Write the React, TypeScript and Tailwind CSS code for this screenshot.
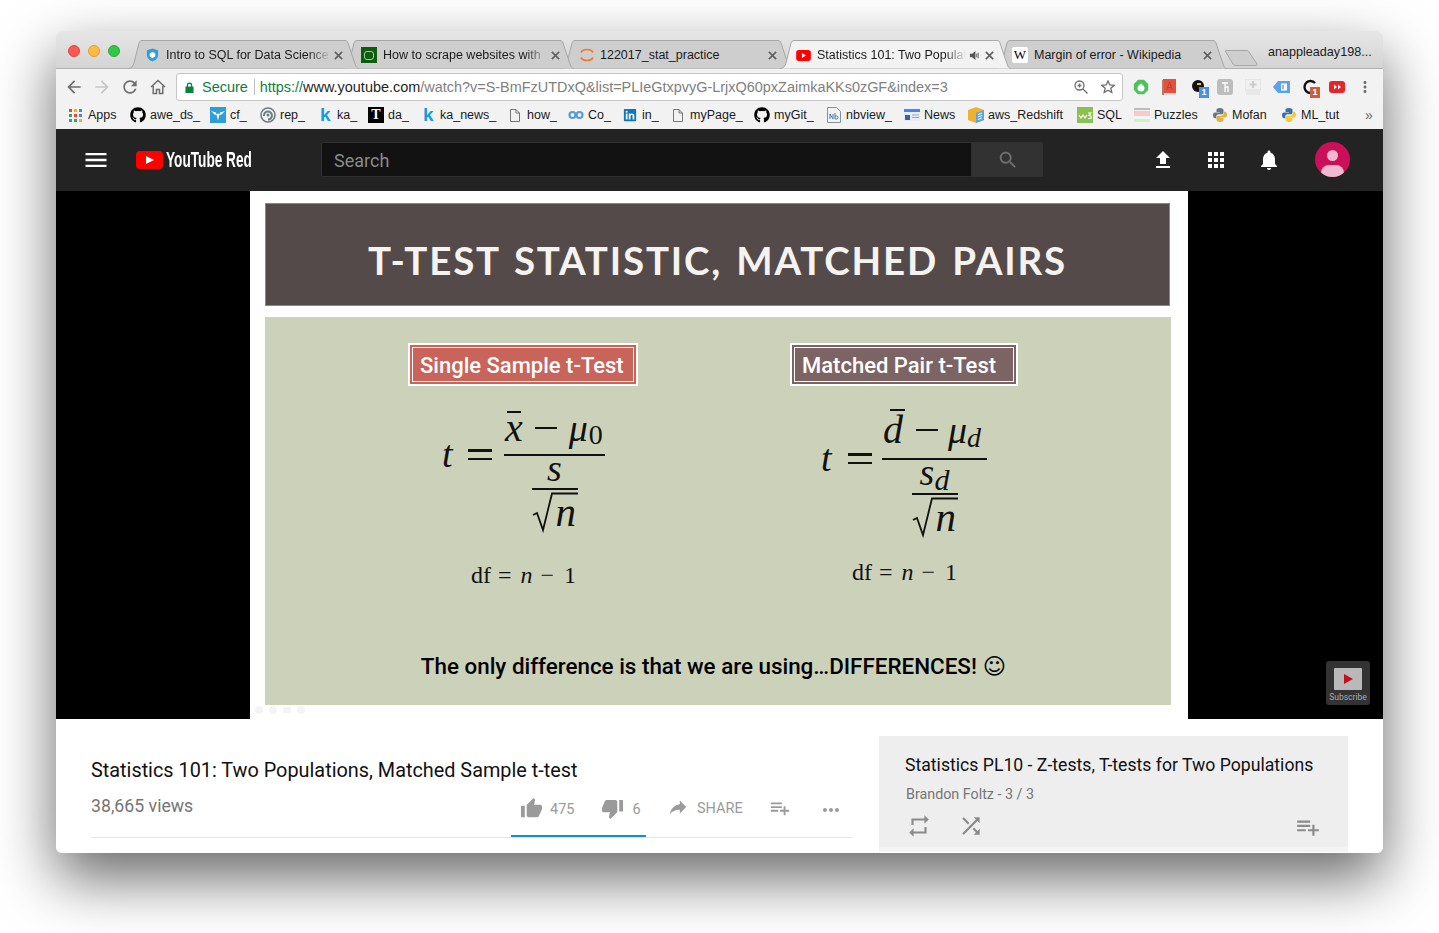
import React from "react";
import { FaGithub, FaLinkedin } from "react-icons/fa";

const P = ({ d, cls, vb = "0 0 24 24" }: { d: string; cls: string; vb?: string }) => (
  <svg viewBox={vb} className={cls} fill="currentColor"><path d={d} /></svg>
);

const I = {
  menu: "M3 18h18v-2H3v2zm0-5h18v-2H3v2zm0-7v2h18V6H3z",
  search: "M15.5 14h-.79l-.28-.27C15.41 12.59 16 11.11 16 9.5 16 5.91 13.09 3 9.5 3S3 5.91 3 9.5 5.91 16 9.5 16c1.61 0 3.09-.59 4.23-1.57l.27.28v.79l5 4.99L20.49 19l-4.99-5zm-6 0C7.01 14 5 11.99 5 9.5S7.01 5 9.5 5 14 7.01 14 9.5 11.99 14 9.5 14z",
  upload: "M9 16h6v-6h4l-7-7-7 7h4zm-4 2h14v2H5z",
  apps: "M4 8h4V4H4v4zm6 12h4v-4h-4v4zm-6 0h4v-4H4v4zm0-6h4v-4H4v4zm6 0h4v-4h-4v4zm6-10v4h4V4h-4zm-6 4h4V4h-4v4zm6 6h4v-4h-4v4zm0 6h4v-4h-4v4z",
  bell: "M12 22c1.1 0 2-.9 2-2h-4c0 1.1.89 2 2 2zm6-6v-5c0-3.07-1.64-5.64-4.5-6.32V4c0-.83-.67-1.5-1.5-1.5s-1.5.67-1.5 1.5v.68C7.63 5.36 6 7.92 6 11v5l-2 2v1h16v-1l-2-2z",
  up: "M1 21h4V9H1v12zm22-11c0-1.1-.9-2-2-2h-6.31l.95-4.57.03-.32c0-.41-.17-.79-.44-1.06L14.17 1 7.59 7.59C7.22 7.95 7 8.45 7 9v10c0 1.1.9 2 2 2h9c.83 0 1.54-.5 1.84-1.22l3.02-7.05c.09-.23.14-.47.14-.73v-2z",
  down: "M15 3H6c-.83 0-1.54.5-1.84 1.22l-3.02 7.05c-.09.23-.14.47-.14.73v2c0 1.1.9 2 2 2h6.31l-.95 4.57-.03.32c0 .41.17.79.44 1.06L9.83 23l6.59-6.59c.36-.36.58-.86.58-1.41V5c0-1.1-.9-2-2-2zm4 0v12h4V3h-4z",
  share: "M14 9V5l7 7-7 7v-4.1c-5 0-8.5 1.6-11 5.1 1-5 4-10 11-11z",
  add: "M14 10H2v2h12v-2zm0-4H2v2h12V6zm4 8v-4h-2v4h-4v2h4v4h2v-4h4v-2h-4zM2 16h8v-2H2v2z",
  repeat: "M7 7h10v3l4-4-4-4v3H5v6h2V7zm10 10H7v-3l-4 4 4 4v-3h12v-6h-2v4z",
  shuffle: "M10.59 9.17L5.41 4 4 5.41l5.17 5.17 1.42-1.41zM14.5 4l2.04 2.04L4 18.59 5.41 20 17.96 7.46 20 9.5V4h-5.5zm.33 9.41l-1.41 1.41 3.13 3.13L14.5 20H20v-5.5l-2.04 2.04-3.13-3.13z",
  back: "M20 11H7.83l5.59-5.59L12 4l-8 8 8 8 1.41-1.41L7.83 13H20v-2z",
  forward: "M12 4l-1.41 1.41L16.17 11H4v2h12.17l-5.58 5.59L12 20l8-8z",
  reload: "M17.65 6.35C16.2 4.9 14.21 4 12 4c-4.42 0-7.99 3.58-7.99 8s3.57 8 7.99 8c3.73 0 6.84-2.55 7.73-6h-2.08c-.82 2.33-3.04 4-5.65 4-3.31 0-6-2.69-6-6s2.69-6 6-6c1.66 0 3.14.69 4.22 1.78L13 11h7V4l-2.35 2.35z",
  dots: "M6 10c-1.1 0-2 .9-2 2s.9 2 2 2 2-.9 2-2-.9-2-2-2zm12 0c-1.1 0-2 .9-2 2s.9 2 2 2 2-.9 2-2-.9-2-2-2zm-6 0c-1.1 0-2 .9-2 2s.9 2 2 2 2-.9 2-2-.9-2-2-2z",
};

const Close = () => (
  <svg viewBox="0 0 10 10" className="w-[9px] h-[9px] text-[#5f5f5f]" stroke="currentColor" strokeWidth="1.8"><path d="M1 1l8 8M9 1l-8 8" /></svg>
);

const TAB_W = 231;

const Tab = ({ wrap, active, icon, iconCls, text, textCls, speaker, closeCls }: { wrap: string; active?: boolean; icon: React.ReactNode; iconCls: string; text: string; textCls: string; speaker?: boolean; closeCls: string }) => (
  <div className={`relative h-[29px] shrink-0 ${wrap}`}>
    <svg width={TAB_W} height={29} className="absolute left-0 top-0">
      <path d={`M0.5 28.5 C4 28 5 26 6 23 L11 3 C11.6 1.4 12.5 0.5 14 0.5 L${TAB_W - 14} 0.5 C${TAB_W - 12.5} 0.5 ${TAB_W - 11.6} 1.4 ${TAB_W - 11} 3 L${TAB_W - 4} 24 C${TAB_W - 3} 27 ${TAB_W - 2} 28 ${TAB_W - 0.5} 28.5`} fill={active ? "#f2f2f2" : "#cecece"} stroke={active ? "#a9a9a9" : "#a6a6a6"} />
    </svg>
    <div className="relative flex items-center h-full w-[231px] pt-[1px]">
      <div className={`flex items-center justify-start h-[16px] shrink-0 ${iconCls}`}>{icon}</div>
      <span className={`text-[12.5px] text-[#1a1a1a] whitespace-nowrap overflow-hidden [mask-image:linear-gradient(to_right,black_86%,transparent)] ${textCls}`}>{text}</span>
      {speaker && (
        <svg viewBox="0 0 12 12" className="w-[11px] h-[11px] ml-[3px] text-[#555]" fill="currentColor"><path d="M1 4h2.5L7 1v10L3.500 8H1z" /><path d="M8.500 4v4M10 3v6" stroke="currentColor" fill="none" /></svg>
      )}
      <div className={closeCls}><Close /></div>
    </div>
  </div>
);

const DocIcon = () => (
  <svg viewBox="0 0 10 13" className="w-[10px] h-[13px]" fill="none" stroke="#777"><path d="M.5.5h5.500l3.500 3.500v8.500h-9zM6 .5v3.500h3.500" /></svg>
);
const KIcon = () => <span className="w-[10px] text-[#1c9ad6] font-bold text-[19px] leading-[16px] [font-family:'Liberation_Sans',sans-serif]">k</span>;
const Python = ({ cls = "", c1 = "#3572a5", c2 = "#f2c83c" }: { cls?: string; c1?: string; c2?: string }) => (
  <svg viewBox="0 0 16 16" className={`w-[16px] h-[16px] ${cls}`}>
    <path d="M8 1C5 1 4.500 2 4.500 3.200V5H8v.6H3C1.600 5.600 1 6.800 1 8.300s.6 2.900 2 2.900h1.300V9.500c0-1.200 1-2.200 2.200-2.200h3.200c1 0 1.800-.8 1.800-1.800V3.200C11.500 2 10.500 1 8 1z" fill={c1} />
    <path d="M8 15c3 0 3.500-1 3.500-2.200V11H8v-.6h5c1.400 0 2-1.200 2-2.700s-.6-2.900-2-2.900h-1.300v1.700c0 1.200-1 2.200-2.200 2.200H6.300c-1 0-1.800.8-1.800 1.800v2.300C4.500 14 5.500 15 8 15z" fill={c2} />
  </svg>
);

const bookmarks: { icon: React.ReactNode; t: string; ml: string; gap: string; w: string }[] = [
  { t: "Apps", ml: "ml-0", gap: "ml-[6px]", w: "w-[30px]", icon: (
    <svg viewBox="0 0 13 13" className="w-[13px] h-[13px]">
      {[["#e8453c", 0, 0], ["#f4b400", 5, 0], ["#4285f4", 10, 0], ["#34a853", 0, 5], ["#e8453c", 5, 5], ["#4285f4", 10, 5], ["#4285f4", 0, 10], ["#34a853", 5, 10], ["#f4b400", 10, 10]].map(([c, x, y], i) => (
        <rect key={i} x={x as number} y={y as number} width="3" height="3" fill={c as string} />
      ))}
    </svg>) },
  { t: "awe_ds_", ml: "ml-[12px]", gap: "ml-[4px]", w: "w-[47px]", icon: <FaGithub className="w-[16px] h-[16px] text-black" /> },
  { t: "cf_", ml: "ml-[13px]", gap: "ml-[4px]", w: "w-[17px]", icon: (
    <svg viewBox="0 0 16 16" className="w-[16px] h-[16px]"><rect width="16" height="16" fill="#2d9fd8" /><path d="M1 4l5 1.500 2 8 2-8L15 4l-4 4-3-1.500L5 8z" fill="#fff" /></svg>) },
  { t: "rep_", ml: "ml-[13px]", gap: "ml-[4px]", w: "w-[24px]", icon: (
    <svg viewBox="0 0 16 16" className="w-[16px] h-[16px]" fill="none"><circle cx="8" cy="8" r="7" stroke="#6b7c86" strokeWidth="1.600" /><path d="M4 9a4 4 0 1 1 4 3.500" stroke="#6b7c86" strokeWidth="2" /><circle cx="8" cy="8" r="1.500" fill="#6b7c86" /></svg>) },
  { t: "ka_", ml: "ml-[16px]", gap: "ml-[7px]", w: "w-[19px]", icon: <KIcon /> },
  { t: "da_", ml: "ml-[12px]", gap: "ml-[4px]", w: "w-[20px]", icon: (
    <div className="w-[16px] h-[16px] bg-black text-white text-[14px] leading-[16px] font-bold text-center [font-family:'Liberation_Serif',serif]">T</div>) },
  { t: "ka_news_", ml: "ml-[15px]", gap: "ml-[7px]", w: "w-[54px]", icon: <KIcon /> },
  { t: "how_", ml: "ml-[16px]", gap: "ml-[7px]", w: "w-[28px]", icon: <DocIcon /> },
  { t: "Co_", ml: "ml-[13px]", gap: "ml-[4px]", w: "w-[21px]", icon: (
    <svg viewBox="0 0 16 16" className="w-[16px] h-[16px]" fill="none" stroke="#5c9bd8" strokeWidth="2.200"><circle cx="4.500" cy="8" r="3" /><circle cx="11.500" cy="8" r="3" /></svg>) },
  { t: "in_", ml: "ml-[14px]", gap: "ml-[5px]", w: "w-[16px]", icon: <FaLinkedin className="w-[14px] h-[14px] text-[#0b77b5]" /> },
  { t: "myPage_", ml: "ml-[15px]", gap: "ml-[7px]", w: "w-[51px]", icon: <DocIcon /> },
  { t: "myGit_", ml: "ml-[13px]", gap: "ml-[4px]", w: "w-[39px]", icon: <FaGithub className="w-[16px] h-[16px] text-black" /> },
  { t: "nbview_", ml: "ml-[14px]", gap: "ml-[5px]", w: "w-[45px]", icon: (
    <svg viewBox="0 0 14 16" className="w-[14px] h-[16px]" fill="none"><path d="M.5.5h9l4 4v11H.5z" stroke="#8a9099" /><path d="M3 12V7l3 5V7M8 6v6h1.500a1.500 1.500 0 0 0 0-3H8" stroke="#4a7fb5" /></svg>) },
  { t: "News", ml: "ml-[13px]", gap: "ml-[4px]", w: "w-[32px]", icon: (
    <svg viewBox="0 0 16 16" className="w-[16px] h-[16px]"><rect y="2" width="16" height="12" fill="#e8edf5" /><rect y="2" width="16" height="3" fill="#4285f4" /><rect x="1" y="8" width="5" height="5" fill="#3c5bb8" /><path d="M8 8h7M8 10.500h7" stroke="#9aa5b8" /></svg>) },
  { t: "aws_Redshift", ml: "ml-[12px]", gap: "ml-[4px]", w: "w-[76px]", icon: (
    <svg viewBox="0 0 16 16" className="w-[16px] h-[16px]"><path d="M8 0l8 3v10l-8 3-8-3V3z" fill="#f0b030" /><path d="M8 6l8-3v10l-8 3z" fill="#5ba7d8" /><path d="M10 7.500l4-1.500M10 10l4-1.500M10 12.500l4-1.500" stroke="#fff" /></svg>) },
  { t: "SQL", ml: "ml-[13px]", gap: "ml-[4px]", w: "w-[24px]", icon: (
    <svg viewBox="0 0 16 16" className="w-[16px] h-[16px]"><rect width="16" height="16" fill="#8cc152" /><path d="M2 8l2 3 2-3 2 3 2-3M11 6h3l-2 2.500q3 0 2 3h-3" stroke="#fff" fill="none" strokeWidth="1.200" /></svg>) },
  { t: "Puzzles", ml: "ml-[13px]", gap: "ml-[4px]", w: "w-[44px]", icon: (
    <svg viewBox="0 0 16 16" className="w-[16px] h-[16px]"><rect y="1" width="16" height="2" fill="#bbb" /><rect y="4" width="16" height="5" fill="#f9c8c8" /><rect y="9" width="16" height="3" fill="#f5f5f5" /><rect y="12" width="16" height="3" fill="#cdf3c0" /></svg>) },
  { t: "Mofan", ml: "ml-[14px]", gap: "ml-[4px]", w: "w-[36px]", icon: <Python c1="#64748b" c2="#e0b040" /> },
  { t: "ML_tut", ml: "ml-[13px]", gap: "ml-[4px]", w: "w-[39px]", icon: <Python /> },
];

const Badge = ({ n, cls }: { n: string; cls: string }) => (
  <span className={`absolute -right-[2px] -bottom-[3px] w-[10px] h-[11px] text-white text-[9px] leading-[11px] font-bold text-center ${cls}`}>{n}</span>
);

const Toolbar = () => (
  <div className="h-[32px] shrink-0 bg-[#f2f2f2] flex items-center pt-[4px]">
    <P d={I.back} cls="w-[20px] h-[20px] ml-[8px] text-[#6e6e6e]" />
    <P d={I.forward} cls="w-[20px] h-[20px] ml-[8px] text-[#c6c6c6]" />
    <P d={I.reload} cls="w-[20px] h-[20px] ml-[8px] text-[#6e6e6e]" />
    <svg viewBox="0 0 16 16" className="w-[16px] h-[16px] ml-[10px] text-[#6e6e6e]" fill="none" stroke="currentColor" strokeWidth="1.500"><path d="M1 8l7-6.500L15 8M3.200 7v7.500h3.300v-4h3v4h3.300V7" /></svg>
    <div className="ml-[10px] w-[947px] h-[28px] bg-white border border-[#c6c6c6] rounded-[3px] flex items-center text-[14.45px] whitespace-nowrap">
      <svg viewBox="0 0 10 12" className="w-[9px] h-[11px] ml-[8px] text-[#0b8043]" fill="currentColor"><path d="M2 5V3.500a3 3 0 0 1 6 0V5h1.500v7H.5V5zM3.300 5h3.400V3.500a1.700 1.700 0 0 0-3.400 0z" /></svg>
      <span className="ml-[8px] pt-[1px] text-[#0b8043]">Secure</span>
      <span className="ml-[6px] w-px h-[16px] bg-[#bdbdbd]" />
      <span className="ml-[5px] pt-[1px] text-[#0b8043]">https://</span>
      <span className="pt-[1px] text-[#1f1f1f]">www.youtube.com</span>
      <span className="pt-[1px] text-[#808080]">/watch?v=S-BmFzUTDxQ&amp;list=PLIeGtxpvyG-LrjxQ60pxZaimkaKKs0zGF&amp;index=3</span>
      <div className="ml-auto flex items-center mr-[7px]">
        <svg viewBox="0 0 14 14" className="w-[14px] h-[14px] text-[#6e6e6e]" fill="none" stroke="currentColor" strokeWidth="1.300"><circle cx="5.500" cy="5.500" r="4.500" /><path d="M9 9l4.500 4.500M3.500 5.500h4M5.500 3.500v4" /></svg>
        <svg viewBox="0 0 14 14" className="w-[14px] h-[14px] ml-[13px] text-[#6e6e6e]" fill="none" stroke="currentColor" strokeWidth="1.300"><path d="M7 1l1.800 4 4.200.4-3.200 2.800 1 4.300L7 10.200 3.200 12.500l1-4.300L1 5.400 5.200 5z" /></svg>
      </div>
    </div>
    <div className="ml-[10px] flex items-center">
      <svg viewBox="0 0 16 16" className="w-[16px] h-[16px]"><path d="M5 .8h6L15.200 5v6L11 15.200H5L.8 11V5z" fill="#4cc25c" /><path d="M8 4.500c3 2 3.500 3.500 3.500 4.500a3.500 3.500 0 0 1-7 0c0-1 .5-2.500 3.500-4.500z" fill="#fff" /></svg>
      <svg viewBox="0 0 14 16" className="w-[14px] h-[16px] ml-[13px]"><rect x="1" width="13" height="14" fill="#e0523f" /><path d="M7.500 3l-3 8M7.500 3l3 8M5.500 8.500h4" stroke="#c43c2c" fill="none" /><rect y="1" width="2" height="15" fill="#b87a5a" /><rect x="2" y="14" width="12" height="2" fill="#ddd" /></svg>
      <div className="relative w-[16px] h-[16px] ml-[15px]">
        <svg viewBox="0 0 16 16" className="w-[16px] h-[16px]"><circle cx="7" cy="7" r="6" fill="#111" /><path d="M6 4h4v2H6z" fill="#f5c518" /></svg>
        <Badge n="1" cls="bg-[#4a90e2]" />
      </div>
      <svg viewBox="0 0 16 16" className="w-[16px] h-[16px] ml-[10px]"><rect width="16" height="16" rx="3" fill="#bdbdbd" /><path d="M5 4h6M8 4v9M8 8h3v5" stroke="#fff" fill="none" strokeWidth="1.300" /></svg>
      <svg viewBox="0 0 16 16" className="w-[16px] h-[16px] ml-[12px]"><rect width="16" height="11" fill="#f0f0f0" stroke="#ddd" /><path d="M8 2v7M4.500 5.500h7" stroke="#ccc" strokeWidth="2" /><path d="M1 13h14M1 15h14" stroke="#ddd" /></svg>
      <svg viewBox="0 0 17 14" className="w-[17px] h-[14px] ml-[12px]"><path d="M5 1h12v12H5L0 7z" fill="#5aa3ec" /><rect x="8" y="3.500" width="6" height="7" fill="#fff" /><path d="M10 5v4" stroke="#5aa3ec" strokeWidth="1.500" /></svg>
      <div className="relative w-[16px] h-[16px] ml-[12px]">
        <svg viewBox="0 0 16 16" className="w-[16px] h-[16px]" fill="none"><path d="M13 4A6 6 0 1 0 13 12" stroke="#111" strokeWidth="2.400" /></svg>
        <Badge n="1" cls="bg-[#c9603a]" />
      </div>
      <svg viewBox="0 0 16 12" className="w-[16px] h-[12px] ml-[11px]"><rect width="16" height="12" rx="3" fill="#e6252b" /><path d="M5 3.500l3 2.500-3 2.500zM9 3.500l3 2.500-3 2.500z" fill="#fff" /></svg>
      <P d="M12 8c1.100 0 2-.9 2-2s-.9-2-2-2-2 .9-2 2 .9 2 2 2zm0 2c-1.100 0-2 .9-2 2s.9 2 2 2 2-.9 2-2-.9-2-2-2zm0 6c-1.100 0-2 .9-2 2s.9 2 2 2 2-.9 2-2-.9-2-2-2z" cls="w-[18px] h-[18px] ml-[11px] text-[#6e6e6e]" />
    </div>
  </div>
);

const MathT = ({ children, cls = "" }: { children: React.ReactNode; cls?: string }) => (
  <span className={`italic [font-family:'Liberation_Serif',serif] ${cls}`}>{children}</span>
);

const Root = () => (
  <div className="relative h-[44px] w-[46px]">
    <svg viewBox="0 0 46 44" className="absolute inset-0 w-[46px] h-[44px]" fill="none" stroke="#111"><path d="M1 25l4-2 6 17L20 3.500h26" strokeWidth="1.800" /></svg>
    <MathT cls="absolute left-[24px] top-[2px] text-[41px] leading-[40px]">n</MathT>
  </div>
);

const Label = ({ text, cls }: { text: string; cls: string }) => (
  <div className={`h-[43px] border-[2px] border-white p-[2px] ${cls}`}>
    <div className="h-full border border-white flex items-center pl-[7px] pt-[2px] text-white text-[22px] font-medium whitespace-nowrap [font-family:'Roboto',sans-serif]">{text}</div>
  </div>
);

const Equals = () => (
  <div className="w-[24px] flex flex-col gap-[6px]"><div className="h-[2.500px] bg-[#111]" /><div className="h-[2.500px] bg-[#111]" /></div>
);

const Minus = () => <div className="w-[22px] h-[2px] bg-[#111] shrink-0" />;

const Df = ({ cls }: { cls: string }) => (
  <div className={`h-[30px] flex items-center text-[24px] text-[#111] whitespace-nowrap [font-family:'Liberation_Serif',serif] ${cls}`}>
    <span>df</span><span className="ml-[7px]">=</span><MathT cls="ml-[9px]">n</MathT><span className="ml-[8px]">−</span><span className="ml-[10px]">1</span>
  </div>
);

const Slide = () => (
  <div className="flex-1 flex flex-col bg-white pt-[12px] pl-[15px] pr-[17px] overflow-hidden relative">
    <div className="h-[103px] w-[905px] pt-[12px] bg-[#554a4a] border border-[#8d8484] flex items-center justify-center text-[38.500px] text-[#f5f3f0] font-bold tracking-[1.800px] [word-spacing:3px] [font-family:'Lato',sans-serif] whitespace-nowrap">T-TEST STATISTIC, MATCHED PAIRS</div>
    <div className="mt-[11px] h-[388px] w-[906px] bg-[#ccd1ba] flex flex-col">
      <div className="flex pt-[26px] pl-[143px] h-[274px]">
        <div className="flex flex-col w-[230px]">
          <Label text="Single Sample t-Test" cls="bg-[#c8645a] w-[230px]" />
          <div className="flex items-start mt-[24px] ml-[34px]">
            <MathT cls="text-[38px] leading-[40px] mt-[24px] w-[26px] text-[#111]">t</MathT>
            <div className="mt-[39px]"><Equals /></div>
            <div className="ml-[12px] w-[101px] flex flex-col items-center text-[#111]">
              <div className="h-[44px] w-full flex items-center pl-[1px] pb-[9px]">
                <div className="relative"><MathT cls="text-[40px] leading-[40px]">x</MathT><div className="absolute left-[2px] right-[2px] top-[3px] h-[2px] bg-[#111]" /></div>
                <div className="ml-[12px]"><Minus /></div>
                <MathT cls="ml-[12px] text-[38px] leading-[40px]">μ</MathT>
                <span className="ml-[1px] text-[28px] leading-[27px] mt-[14px] [font-family:'Liberation_Serif',serif]">0</span>
              </div>
              <div className="h-[2px] w-full bg-[#111]" />
              <div className="h-[32px] flex items-center pb-[8px]"><MathT cls="text-[38px] leading-[30px]">s</MathT></div>
              <div className="h-[2px] w-[46px] bg-[#111]" />
              <Root />
            </div>
          </div>
          <Df cls="mt-[26px] ml-[63px]" />
        </div>
        <div className="flex flex-col w-[228px] ml-[152px]">
          <Label text="Matched Pair t-Test" cls="bg-[#7d6464] w-[228px]" />
          <div className="flex items-start mt-[26px] ml-[31px]">
            <MathT cls="text-[38px] leading-[40px] mt-[26px] w-[27px] text-[#111]">t</MathT>
            <div className="mt-[41px]"><Equals /></div>
            <div className="ml-[10px] w-[105px] flex flex-col items-center text-[#111]">
              <div className="h-[46px] w-full flex items-center pl-[1px] pb-[10px]">
                <div className="relative"><MathT cls="text-[40px] leading-[40px]">d</MathT><div className="absolute left-[7px] right-[-2px] -top-[1px] h-[2px] bg-[#111]" /></div>
                <div className="ml-[13px]"><Minus /></div>
                <MathT cls="ml-[10px] text-[38px] leading-[40px]">μ</MathT>
                <MathT cls="text-[28px] leading-[27px] mt-[14px]">d</MathT>
              </div>
              <div className="h-[2px] w-full bg-[#111]" />
              <div className="h-[33px] flex items-center pb-[10px]"><MathT cls="text-[38px] leading-[26px]">s</MathT><MathT cls="text-[30px] leading-[27px] mt-[15px]">d</MathT></div>
              <div className="h-[2px] w-[46px] bg-[#111]" />
              <Root />
            </div>
          </div>
          <Df cls="mt-[18px] ml-[62px]" />
        </div>
      </div>
      <div className="mt-[60px] h-[30px] pr-[9px] pt-[1px] flex items-center justify-center text-[22.4px] font-medium text-black whitespace-nowrap [font-family:'Roboto',sans-serif]">The only difference is that we are using…DIFFERENCES! <span className="ml-[6px] [font-family:'DejaVu_Sans',sans-serif] font-normal">☺</span></div>
    </div>
    <div className="flex items-center gap-[6px] mt-[1px] ml-[-10px] opacity-10">
      <div className="w-[8px] h-[8px] rounded-full bg-[#999]" />
      <div className="w-[8px] h-[8px] rounded-full bg-[#999]" />
      <div className="w-[8px] h-[6px] bg-[#999]" />
      <div className="w-[8px] h-[8px] rounded-full bg-[#999]" />
    </div>
  </div>
);

export default function App() {
  return (
    <div className="min-h-[933px] bg-white overflow-hidden pt-[31px] pl-[56px] [font-family:'Liberation_Sans',sans-serif]">
      <div className="w-[1327px] h-[822px] rounded-[6px] overflow-hidden bg-white shadow-[0_25px_60px_rgba(0,0,0,0.6)] flex flex-col">
        <div className="h-[38px] shrink-0 bg-gradient-to-b from-[#e6e6e6] to-[#d4d4d4] border-b border-[#b0b0b0] flex items-end relative">
          <div className="absolute left-[12px] top-[14px] flex gap-[8px]">
            <div className="w-[12px] h-[12px] rounded-full bg-[#fc5753] border border-[#e0443e]" />
            <div className="w-[12px] h-[12px] rounded-full bg-[#fdbc40] border border-[#de9f34]" />
            <div className="w-[12px] h-[12px] rounded-full bg-[#33c748] border border-[#27aa35]" />
          </div>
          <div className="flex items-end ml-[72px] -mb-px">
            <Tab wrap="w-[215px] z-[5]" iconCls="ml-[18px] w-[20px]" text="Intro to SQL for Data Science" textCls="w-[165px]" closeCls="ml-[3px]" icon={
              <svg viewBox="0 0 14 15" className="w-[13px] h-[14px]"><path d="M7 .5l6 2v5c0 3.500-3 6-6 7-3-1-6-3.500-6-7v-5z" fill="#2f9fd8" /><path d="M4 6l3-2 3 2v3l-3 2-3-2z" fill="#fff" /></svg>
            } />
            <Tab wrap="w-[218px] z-[4]" iconCls="ml-[18px] w-[22px]" text="How to scrape websites with" textCls="w-[165px]" closeCls="ml-[3px]" icon={
              <div className="w-[16px] h-[16px] bg-[#0e5c0e] flex items-center justify-center"><div className="w-[10px] h-[9px] border border-[#9fd29f] rounded-[3px]" /></div>
            } />
            <Tab wrap="w-[219px] z-[3]" iconCls="ml-[18px] w-[21px]" text="122017_stat_practice" textCls="w-[165px] [mask-image:none]" closeCls="ml-[3px]" icon={
              <svg viewBox="0 0 16 16" className="w-[16px] h-[16px]" fill="none" stroke="#f07b2c" strokeWidth="1.700"><path d="M2 5.500C4 1.500 12 1.500 14 5.500M2 10.500C4 14.500 12 14.500 14 10.500" /></svg>
            } />
            <Tab wrap="w-[216px] z-[6]" active iconCls="ml-[16px] w-[21px]" text="Statistics 101: Two Populations" textCls="w-[149px]" speaker closeCls="ml-[5px]" icon={
              <svg viewBox="0 0 16 12" className="w-[15px] h-[11px]"><rect width="16" height="12" rx="3" fill="#f00" /><path d="M6.300 3.300l4.400 2.700-4.400 2.700z" fill="#fff" /></svg>
            } />
            <Tab wrap="w-[231px] z-[2]" iconCls="ml-[16px] w-[22px]" text="Margin of error - Wikipedia" textCls="w-[166px] [mask-image:none]" closeCls="ml-[3px]" icon={
              <div className="w-[16px] h-[16px] bg-white rounded-[2px] text-center text-[13px] leading-[16px] text-black [font-family:'Liberation_Serif',serif]">W</div>
            } />
            <svg width="34" height="18" className="-ml-[2px] mb-[3px] shrink-0">
              <path d="M1 2.500h21c1 0 1.500.5 2 1.500l8 12c.4.700 0 1.500-1 1.500H10c-1 0-1.500-.5-2-1.500L.8 4C.4 3 .4 2.500 1 2.500z" fill="#cecece" stroke="#a6a6a6" />
            </svg>
          </div>
          <span className="absolute left-[1212px] top-[12px] text-[12.6px] text-[#1a1a1a] whitespace-nowrap">anappleaday198...</span>
        </div>
        <Toolbar />
        <div className="h-[28px] shrink-0 bg-[#f2f2f2] flex items-center pl-[13px] text-[12.5px] text-[#1a1a1a] whitespace-nowrap">
          {bookmarks.map((b) => (
            <div key={b.t} className={`flex items-center shrink-0 ${b.ml}`}>
              {b.icon}
              <span className={`${b.gap} ${b.w}`}>{b.t}</span>
            </div>
          ))}
          <span className="ml-[25px] text-[14px] text-[#666] leading-none">»</span>
        </div>
        <div className="h-[62px] shrink-0 bg-[#232323] flex items-center [font-family:'Roboto',sans-serif]">
          <P d={I.menu} cls="w-[28px] h-[28px] ml-[26px] text-white" />
          <div className="ml-[26px] w-[27px] h-[18px] bg-[#f00] rounded-[4px] flex items-center justify-center shrink-0">
            <svg viewBox="0 0 8 8" className="w-[8px] h-[8px]" fill="#fff"><path d="M0 0l8 4-8 4z" /></svg>
          </div>
          <div className="ml-[3px] w-[86px] h-[24px]">
            <span className="inline-block origin-left scale-x-[0.62] text-white text-[22px] leading-[24px] font-bold whitespace-nowrap [font-family:'Liberation_Sans',sans-serif]">YouTube Red</span>
          </div>
          <div className="ml-[69px] -mt-[1px] w-[651px] h-[35px] bg-[#121212] border border-[#303030] rounded-l-[2px] flex items-center pl-[12px] pt-[1px] text-[#8a8a8a] text-[18px]">Search</div>
          <div className="w-[71px] -mt-[1px] h-[35px] bg-[#323232] rounded-r-[2px] flex items-center justify-center">
            <P d={I.search} cls="w-[22px] h-[22px] text-[#6f6f6f]" />
          </div>
          <P d={I.upload} cls="w-[24px] h-[24px] ml-[108px] text-white" />
          <P d={I.apps} cls="w-[24px] h-[24px] ml-[29px] text-white" />
          <P d={I.bell} cls="w-[24px] h-[24px] ml-[29px] text-white" />
          <div className="relative ml-[34px] -mt-[1px] w-[35px] h-[35px] rounded-full bg-[#cb0f58] overflow-hidden">
            <div className="absolute left-[12px] top-[8px] w-[11px] h-[11px] rounded-full bg-[#f0b9cf]" />
            <div className="absolute left-[6px] top-[23px] w-[23px] h-[16px] rounded-full bg-[#f0b9cf]" />
          </div>
        </div>
        <div className="h-[528px] shrink-0 bg-black flex relative">
          <div className="w-[194px] shrink-0" />
          <div className="w-[938px] shrink-0 flex"><Slide /></div>
          <div className="absolute left-[1270px] top-[470px] w-[44px] h-[44px] bg-[#333] rounded-[3px] flex flex-col items-center pt-[7px]">
            <div className="w-[28px] h-[22px] bg-[#b9b9b9] rounded-[1px] flex items-center justify-center">
              <svg viewBox="0 0 10 10" className="w-[10px] h-[10px]"><path d="M1 0l9 5-9 5z" fill="#c4101c" /></svg>
            </div>
            <span className="text-[8.500px] leading-[14px] text-[#aaa] [font-family:'Roboto',sans-serif]">Subscribe</span>
          </div>
        </div>
        <div className="flex-1 flex bg-white [font-family:'Roboto',sans-serif]">
          <div className="ml-[35px] w-[761px] flex flex-col">
            <div className="mt-[40px] h-[24px] text-[19.85px] leading-[24px] text-[#111] whitespace-nowrap">Statistics 101: Two Populations, Matched Sample t-test</div>
            <div className="mt-[7px] h-[48px] flex border-b border-[#e6e6e6]">
              <div className="h-[32px] flex items-center text-[17.7px] text-[#757575] w-[420px]">38,665 views</div>
              <div className="w-[135px] h-[47px] border-b-2 border-[#0a8fe0] flex items-start pt-[6px] text-[14.5px] text-[#9a9a9a]">
                <div className="flex items-center ml-[9px]"><P d={I.up} cls="w-[23px] h-[23px] text-[#9a9a9a]" /><span className="ml-[7px] pt-[3px]">475</span></div>
                <div className="flex items-center ml-[27px]"><P d={I.down} cls="w-[23px] h-[23px] text-[#9a9a9a]" /><span className="ml-[8px] pt-[3px]">6</span></div>
              </div>
              <div className="flex items-start pt-[6px] text-[14.5px] text-[#9a9a9a]">
                <P d={I.share} cls="ml-[21px] w-[22px] h-[22px]" />
                <span className="ml-[8px] leading-[24px] pt-[1px]">SHARE</span>
                <P d={I.add} cls="ml-[26px] w-[22px] h-[22px] mt-[1px]" />
                <P d={I.dots} cls="ml-[28px] w-[24px] h-[24px] mt-[2px]" />
              </div>
            </div>
          </div>
          <div className="ml-[27px] mt-[17px] w-[469px] h-[116px] flex flex-col">
            <div className="h-[111px] bg-[#eeeeee] px-[26px] flex flex-col">
              <div className="mt-[17px] text-[17.65px] leading-[24px] text-[#111] whitespace-nowrap">Statistics PL10 - Z-tests, T-tests for Two Populations</div>
              <div className="mt-[8px] ml-[1px] text-[14.3px] leading-[18px] text-[#757575]">Brandon Foltz - 3 / 3</div>
              <div className="mt-[9px] flex items-center text-[#8a8a8a]">
                <P d={I.repeat} cls="w-[26px] h-[26px] text-[#8a8a8a] ml-[1px]" />
                <P d={I.shuffle} cls="w-[26px] h-[26px] ml-[26px]" />
                <P d={I.add} cls="w-[26px] h-[26px] ml-auto mr-[1px] mt-[2px]" />
              </div>
            </div>
            <div className="h-[5px] bg-[#f4f4f4]" />
          </div>
        </div>
      </div>
    </div>
  );
}
